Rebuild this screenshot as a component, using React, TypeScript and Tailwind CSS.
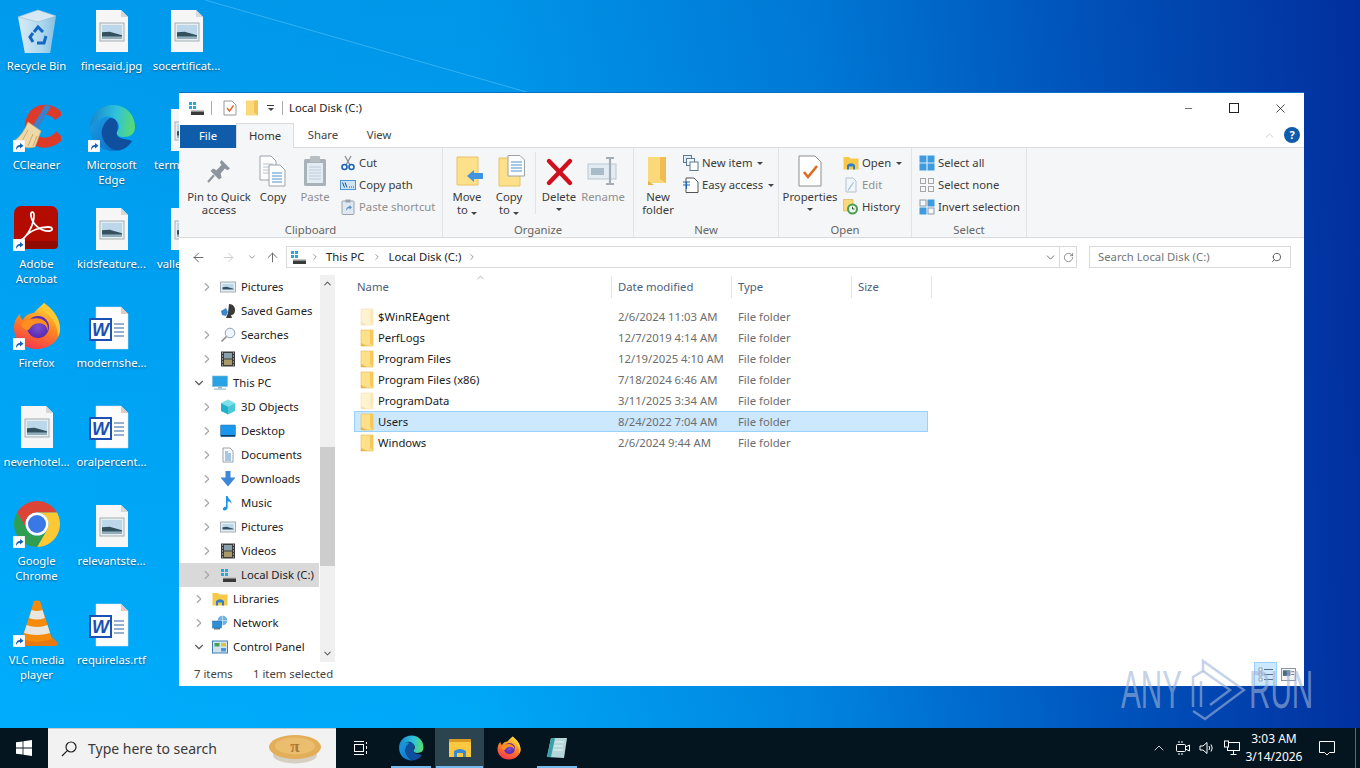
import type { ReactNode } from 'react';
import { ArrowLeft, ArrowRight, ArrowUp, ChevronDown, ChevronRight, ChevronUp, RotateCw, Search, Minus, X } from 'lucide-react';

// ---------- desktop icons ----------
function ImageThumb({ x = 12, y = 18, w = 24, h = 18 }: { x?: number; y?: number; w?: number; h?: number }) {
  return (
    <g>
      <rect x={x} y={y} width={w} height={h} fill="#e6eef2" stroke="#a3aeb4" strokeWidth="1" />
      <rect x={x + 2} y={y + 2} width={w - 4} height={h - 4} fill="#bcd6ea" />
      <path d={`M${x + 2} ${y + h * 0.52} L${x + w * 0.4} ${y + h * 0.48} L${x + w - 2} ${y + h * 0.68} V${y + h * 0.76} H${x + 2}Z`} fill="#33505d" />
      <rect x={x + 2} y={y + h * 0.76} width={w - 4} height={h * 0.24 - 2} fill="#92aebb" />
    </g>
  );
}

function ImageFile() {
  return (
    <svg viewBox="0 0 48 48" className="w-12 h-12">
      <path d="M8 5 H33 L40 12 V47 H8Z" fill="#f6f6f6" />
      <path d="M33 5 L40 12 H33Z" fill="#d8d8d8" />
      <ImageThumb />
    </svg>
  );
}

function WordFile() {
  return (
    <svg viewBox="0 0 48 48" className="w-12 h-12">
      <path d="M8 5 H33 L40 12 V47 H8Z" fill="#fdfdfd" stroke="#dcdcdc" strokeWidth="0.5" />
      <path d="M33 5 L40 12 H33Z" fill="#e2c9c4" />
      <rect x="2" y="17" width="21" height="21" fill="#fff" stroke="#1c50b4" strokeWidth="2" />
      <text x="12.5" y="34" textAnchor="middle" fontFamily="Liberation Sans" fontWeight="700" fontStyle="italic" fontSize="18" fill="#1c50b4">W</text>
      <path d="M26 22 H36 M26 26 H36 M26 30 H36 M26 34 H36" stroke="#33609f" strokeWidth="1.2" />
    </svg>
  );
}

function RecycleBin() {
  return (
    <svg viewBox="0 0 48 48" className="w-12 h-12">
      <defs>
        <linearGradient id="binG" x1="0" x2="1">
          <stop offset="0" stopColor="#e3eef5" />
          <stop offset="0.6" stopColor="#b8dcef" />
          <stop offset="1" stopColor="#8fc0dd" />
        </linearGradient>
      </defs>
      <path d="M5 12 L25 5 L43 11 L37 49 Q24 52 12 49Z" fill="url(#binG)" opacity="0.95" />
      <path d="M5 12 L25 5 L43 11 L25 17Z" fill="#d6e8f2" stroke="#94b8cc" strokeWidth="0.6" />
      <g fill="none" stroke="#1467c4" strokeWidth="3">
        <path d="M21 27 L25 22 L30 27" />
        <path d="M33 31 L31 38 L24 38" />
        <path d="M20 37 L17 32 L20 28" />
      </g>
    </svg>
  );
}

function CCleaner() {
  return (
    <svg viewBox="0 0 48 48" className="w-12 h-12">
      <path d="M46 13 C39 4 26 3 20 12 C14 21 17 35 27 38 C34 40 41 37 47 31" fill="none" stroke="#dd3a2a" strokeWidth="10" />
      <path d="M33 0 L38 3 L24 26 L19 23Z" fill="#3d7fc9" />
      <path d="M15 18 L28 27 L22 43 Q10 46 1 37 Q10 31 15 18Z" fill="#efd9a7" stroke="#c9ab70" strokeWidth="0.7" />
      <path d="M15 26 L9 37 M20 30 L15 42 M24 32 L20 42" stroke="#c9ab70" strokeWidth="1" />
    </svg>
  );
}

function EdgeIcon({ size = 48 }: { size?: number }) {
  return (
    <svg viewBox="0 0 48 48" width={size} height={size}>
      <defs>
        <linearGradient id="edgeA" x1="0" y1="0.5" x2="1" y2="0.6">
          <stop offset="0" stopColor="#1787cf" />
          <stop offset="0.55" stopColor="#2fc2dc" />
          <stop offset="1" stopColor="#5bdc6a" />
        </linearGradient>
        <linearGradient id="edgeB" x1="0" y1="0" x2="1" y2="1">
          <stop offset="0" stopColor="#1b9de2" />
          <stop offset="1" stopColor="#0c6fc7" />
        </linearGradient>
      </defs>
      <path d="M2 24 C3 18 9 14 15 13.5 C21 13 25 15 22 16 C15 19 12 27 15 34 C17 40 22 45 28 47 C13 48 2 38 2 24Z" fill="url(#edgeB)" />
      <path d="M22 14 C30 14 31 22 29 28 C28 32 31 34 36 35 C40 36 43 36 44 37 C41 42 36 46 30 46.5 C25 47 18 42 15 35 C12 28 14 20 22 14Z" fill="#0f4f9e" />
      <path d="M2 24 C2 10 12 1 25 1 C38 1 47 11 47 23 C47 30 42 33 36 33 C31 33 28 31 29 28 C31 25 32 23 30 19 C27 13 20 11 14 14 C8 17 3 20 2 24Z" fill="url(#edgeA)" />
    </svg>
  );
}

function AcrobatIcon() {
  return (
    <svg viewBox="0 0 48 48" className="w-12 h-12">
      <rect x="1" y="3" width="44" height="43" rx="7" fill="#b30b00" />
      <rect x="1" y="38" width="44" height="8" rx="4" fill="#8f0a00" />
      <path d="M8 37 C14 34 21 22 21 12 C21 8 17 8 18 13 C19 21 28 29 37 28 C40 27 40 24 35 24 C28 24 17 27 11 35 C9 38 8 38 8 37Z" fill="none" stroke="#fff" strokeWidth="1.8" />
    </svg>
  );
}

function FirefoxIcon({ size = 48 }: { size?: number }) {
  return (
    <svg viewBox="0 0 48 48" width={size} height={size}>
      <defs>
        <linearGradient id="ffA" x1="0.7" y1="0" x2="0.3" y2="1">
          <stop offset="0" stopColor="#ffdd3f" />
          <stop offset="0.45" stopColor="#ff8a1f" />
          <stop offset="1" stopColor="#f5354f" />
        </linearGradient>
        <radialGradient id="ffB" cx="0.5" cy="0.5" r="0.5">
          <stop offset="0" stopColor="#7d4fd0" />
          <stop offset="1" stopColor="#5a2bb0" />
        </radialGradient>
      </defs>
      <path d="M24 47 C10 47 1 37 1 26 C1 20 4 14 7 12 C7 15 8 17 10 18 C12 13 17 11 21 11 C24 7 27 5 31 1 C36 6 47 14 47 27 C47 38 37 47 24 47Z" fill="url(#ffA)" />
      <path d="M31 1 C38 6 47 14 47 27 C47 30 46 33 45 35 C45 24 40 14 31 10Z" fill="#ffc933" />
      <circle cx="25" cy="25" r="11" fill="url(#ffB)" />
      <path d="M8 22 C14 17 22 15 28 17 C34 19 36 25 34 29 C35 22 27 20 22 22 C17 24 17 28 15 28 C12 28 9 26 8 22Z" fill="#ff8f1f" />
    </svg>
  );
}

function ChromeIcon() {
  return (
    <svg viewBox="0 0 48 48" className="w-12 h-12">
      <path d="M4.1 12.5 A23 23 0 0 1 43.9 12.5 L24 12.5 A11.5 11.5 0 0 0 14 29.7 Z" fill="#db4437" />
      <path d="M43.9 12.5 A23 23 0 0 1 24 47 L34 29.7 A11.5 11.5 0 0 0 24 12.5 Z" fill="#fcc934" />
      <path d="M24 47 A23 23 0 0 1 4.1 12.5 L14 29.7 A11.5 11.5 0 0 0 34 29.7 Z" fill="#2f9e52" />
      <circle cx="24" cy="24" r="11.5" fill="#fff" />
      <circle cx="24" cy="24" r="9" fill="#3b78e7" />
    </svg>
  );
}

function VlcIcon() {
  return (
    <svg viewBox="0 0 48 48" className="w-12 h-12">
      <path d="M3 44 L10 37 H38 L45 44 Q45 47 42 47 H6 Q3 47 3 44Z" fill="#e8780f" />
      <path d="M21 2 Q24 1 27 2 L39 40 Q24 46 9 40Z" fill="#f58a0b" />
      <path d="M18.5 11 Q24 13 29.5 11 L32 19 Q24 22 16 19Z" fill="#e9e6df" />
      <path d="M13.5 26 Q24 30 34.5 26 L37 34 Q24 38 11 34Z" fill="#e9e6df" />
    </svg>
  );
}

function ShortcutArrow() {
  return (
    <svg viewBox="0 0 12 12" className="w-3 h-3 absolute left-0 bottom-0">
      <rect width="12" height="12" fill="#fff" stroke="#c8c8c8" strokeWidth="0.5" />
      <path d="M3 10 C3 6 5 5 7 5 V3 L10.5 5.8 L7 8.5 V6.8 C5.5 6.8 4.5 7.5 3 10Z" fill="#1261b8" />
    </svg>
  );
}

type DeskItem = { icon: ReactNode; label: string[]; shortcut?: boolean; clip?: string };

const desktopItems: DeskItem[] = [
  { icon: <RecycleBin />, label: ['Recycle Bin'] },
  { icon: <CCleaner />, label: ['CCleaner'], shortcut: true },
  { icon: <AcrobatIcon />, label: ['Adobe', 'Acrobat'], shortcut: true },
  { icon: <FirefoxIcon />, label: ['Firefox'], shortcut: true },
  { icon: <ImageFile />, label: ['neverhotel...'] },
  { icon: <ChromeIcon />, label: ['Google', 'Chrome'], shortcut: true },
  { icon: <VlcIcon />, label: ['VLC media', 'player'], shortcut: true },
  { icon: <ImageFile />, label: ['finesaid.jpg'] },
  { icon: <EdgeIcon />, label: ['Microsoft', 'Edge'], shortcut: true },
  { icon: <ImageFile />, label: ['kidsfeature...'] },
  { icon: <WordFile />, label: ['modernshe...'] },
  { icon: <WordFile />, label: ['oralpercent...'] },
  { icon: <ImageFile />, label: ['relevantste...'] },
  { icon: <WordFile />, label: ['requirelas.rtf'] },
  { icon: <ImageFile />, label: ['socertificat...'] },
  { icon: <ImageFile />, label: ['term...'], clip: 'text-left pl-[5px]' },
  { icon: <ImageFile />, label: ['valle...'], clip: 'text-left pl-[8px]' },
];

function DesktopIcon({ item }: { item: DeskItem }) {
  return (
    <div className="flex flex-col items-center w-[75px]">
      <div className="relative w-12 h-12">
        {item.icon}
        {item.shortcut && <ShortcutArrow />}
      </div>
      <div className={`mt-[5px] w-full text-center text-white leading-[15px] [text-shadow:0_1px_2px_rgba(0,0,0,0.5)] ${item.clip ?? ''}`}>
        {item.label.map(l => <div key={l}>{l}</div>)}
      </div>
    </div>
  );
}

// ---------- small explorer icons ----------
function DriveIcon() {
  return (
    <svg viewBox="0 0 16 16" className="w-4 h-4 shrink-0">
      <rect x="1" y="2" width="3" height="3" fill="#2aa7dc" />
      <rect x="5" y="2" width="3" height="3" fill="#2aa7dc" />
      <rect x="1" y="6" width="3" height="3" fill="#2aa7dc" />
      <rect x="5" y="6" width="3" height="3" fill="#2aa7dc" />
      <rect x="3" y="10" width="13" height="1.5" fill="#c5c5c5" />
      <rect x="3" y="11.5" width="13" height="3.5" fill="#3a3a3a" />
    </svg>
  );
}

function FolderList({ light }: { light?: boolean }) {
  return (
    <svg viewBox="0 0 14 18" width="14" height="18" className={`shrink-0 ${light ? 'opacity-40' : ''}`}>
      <path d="M1 1 H13 V17 H1Z" fill="#ffe08a" stroke="#e3b94f" strokeWidth="0.6" />
      <path d="M1 14 L7 17 H1Z" fill="#e8b84a" />
      <path d="M10 1 H13 V17 L10 14Z" fill="#f6c85a" />
    </svg>
  );
}

const NavPictures = () => (
  <svg viewBox="0 0 16 16" className="w-4 h-4 shrink-0">
    <ImageThumb x={0.5} y={3} w={15} h={10} />
  </svg>
);
const NavGames = () => (
  <svg viewBox="0 0 16 16" className="w-4 h-4 shrink-0">
    <path d="M9 1 C13 1 15 4 15 7 C15 11 13 12 11 12 L12 15 H6 L8 10Z" fill="#3a3a3a" />
    <path d="M1 8 L6 5 L8 9 L6 13 L2 12Z" fill="#3c87c9" />
  </svg>
);
const NavSearch = () => (
  <svg viewBox="0 0 16 16" className="w-4 h-4 shrink-0" fill="none">
    <circle cx="10" cy="6" r="4.8" fill="#eef6fb" stroke="#8aa4b8" />
    <path d="M6.5 9.5 L1.5 14.5" stroke="#8a8a8a" strokeWidth="1.6" />
  </svg>
);
const NavVideos = () => (
  <svg viewBox="0 0 16 16" className="w-4 h-4 shrink-0">
    <rect x="1" y="0.5" width="14" height="15" fill="#3c3c3c" />
    <rect x="4" y="2" width="8" height="5.5" fill="#8aa0ae" />
    <rect x="4" y="8.5" width="8" height="5.5" fill="#a89a66" />
    <path d="M2 2 H3 M2 5 H3 M2 8 H3 M2 11 H3 M2 14 H3 M13 2 H14 M13 5 H14 M13 8 H14 M13 11 H14 M13 14 H14" stroke="#ddd" />
  </svg>
);
const NavPC = () => (
  <svg viewBox="0 0 16 16" className="w-4 h-4 shrink-0">
    <rect x="0.5" y="1" width="15" height="10.5" fill="#29a3e6" stroke="#7fb5d6" strokeWidth="0.6" />
    <rect x="6" y="11.5" width="4" height="2" fill="#9bb9cc" />
    <rect x="2" y="13.5" width="12" height="1.2" fill="#9bb9cc" />
  </svg>
);
const Nav3D = () => (
  <svg viewBox="0 0 16 16" className="w-4 h-4 shrink-0">
    <path d="M8 0.5 L15 4 L8 7.5 L1 4Z" fill="#7ce0e8" />
    <path d="M1 4 L8 7.5 V15.5 L1 12Z" fill="#21b0c8" />
    <path d="M15 4 L8 7.5 V15.5 L15 12Z" fill="#4ac9da" />
  </svg>
);
const NavDesktop = () => (
  <svg viewBox="0 0 16 16" className="w-4 h-4 shrink-0">
    <rect x="0.5" y="2" width="15" height="11.5" rx="0.8" fill="#1a97ea" stroke="#2a6aa8" strokeWidth="0.5" />
    <rect x="1" y="12" width="14" height="1.5" fill="#0d3f6e" />
  </svg>
);
const NavDocs = () => (
  <svg viewBox="0 0 16 16" className="w-4 h-4 shrink-0">
    <path d="M3 1 H10 L13 4 V15 H3Z" fill="#fdfdfd" stroke="#8a8a8a" strokeWidth="0.8" />
    <path d="M5 5 H8 M5 7 H11 M5 9 H11 M5 11 H11 M5 13 H11" stroke="#4b93c9" />
  </svg>
);
const NavDownloads = () => (
  <svg viewBox="0 0 16 16" className="w-4 h-4 shrink-0">
    <path d="M5.5 0 H10.5 V6.5 H15.5 L8 15.5 L0.5 6.5 H5.5Z" fill="#3c87d8" />
  </svg>
);
const NavMusic = () => (
  <svg viewBox="0 0 16 16" className="w-4 h-4 shrink-0">
    <path d="M6 1 H7.6 C8 4 12 5 11.5 9 C11 7 9.5 6.5 7.6 6.2 V12.5 C7.6 14.5 5.8 15.5 4.5 15.5 C3 15.5 2.5 14.3 3 13.3 C3.6 12 5 11.5 6 11.8Z" fill="#1c93e0" />
  </svg>
);
const NavLibraries = () => (
  <svg viewBox="0 0 16 16" className="w-4 h-4 shrink-0">
    <path d="M0.5 2 H6 L7.5 3.5 H15.5 V14.5 H0.5Z" fill="#f7c948" />
    <path d="M4 14.5 V10 Q8 6.5 12 10 V14.5 H10 V11.5 H6 V14.5Z" fill="#2f7fc9" />
  </svg>
);
const NavNetwork = () => (
  <svg viewBox="0 0 16 16" className="w-4 h-4 shrink-0">
    <circle cx="10.5" cy="5.5" r="4.8" fill="#6fb2e0" />
    <path d="M6 5.5 H15 M10.5 1 V10" stroke="#d7ebf7" strokeWidth="0.7" />
    <rect x="0.5" y="6" width="9" height="7" fill="#2f8fd6" stroke="#1c6aa8" strokeWidth="0.5" />
    <rect x="2" y="13" width="6" height="1.5" fill="#5a7b93" />
  </svg>
);
const NavControl = () => (
  <svg viewBox="0 0 16 16" className="w-4 h-4 shrink-0">
    <rect x="0.5" y="2" width="15" height="12" fill="#cfe6f6" stroke="#3f7fb5" />
    <rect x="2.5" y="4" width="5" height="3.5" fill="#48a14d" />
    <rect x="9" y="4" width="5" height="3.5" fill="#e2c048" />
    <rect x="2.5" y="9" width="5" height="3.5" fill="#d9dce0" />
    <rect x="9" y="9" width="5" height="3.5" fill="#4e95d6" />
  </svg>
);

type NavItem = { icon: ReactNode; label: string; level: 1 | 2; arrow?: 'right' | 'down'; active?: boolean };

const navItems: NavItem[] = [
  { icon: <NavPictures />, label: 'Pictures', level: 2, arrow: 'right' },
  { icon: <NavGames />, label: 'Saved Games', level: 2 },
  { icon: <NavSearch />, label: 'Searches', level: 2, arrow: 'right' },
  { icon: <NavVideos />, label: 'Videos', level: 2, arrow: 'right' },
  { icon: <NavPC />, label: 'This PC', level: 1, arrow: 'down' },
  { icon: <Nav3D />, label: '3D Objects', level: 2, arrow: 'right' },
  { icon: <NavDesktop />, label: 'Desktop', level: 2, arrow: 'right' },
  { icon: <NavDocs />, label: 'Documents', level: 2, arrow: 'right' },
  { icon: <NavDownloads />, label: 'Downloads', level: 2, arrow: 'right' },
  { icon: <NavMusic />, label: 'Music', level: 2, arrow: 'right' },
  { icon: <NavPictures />, label: 'Pictures', level: 2, arrow: 'right' },
  { icon: <NavVideos />, label: 'Videos', level: 2, arrow: 'right' },
  { icon: <DriveIcon />, label: 'Local Disk (C:)', level: 2, arrow: 'right', active: true },
  { icon: <NavLibraries />, label: 'Libraries', level: 1, arrow: 'right' },
  { icon: <NavNetwork />, label: 'Network', level: 1, arrow: 'right' },
  { icon: <NavControl />, label: 'Control Panel', level: 1, arrow: 'down' },
];

function NavRow({ item }: { item: NavItem }) {
  return (
    <div className={`h-6 flex items-center w-[140px] ${item.level === 2 ? 'pl-[23px]' : 'pl-[15px]'} ${item.active ? 'bg-[#d9d9d9]' : ''}`}>
      <span className="w-[10px] shrink-0 flex justify-center">
        {item.arrow === 'right' && <ChevronRight size={14} strokeWidth={2} className="text-[#a6a6a6] shrink-0" />}
        {item.arrow === 'down' && <ChevronDown size={14} strokeWidth={2} className="text-[#5a5a5a] shrink-0" />}
      </span>
      <span className="ml-[8px]">{item.icon}</span>
      <span className="ml-[5px] whitespace-nowrap">{item.label}</span>
    </div>
  );
}

// ---------- ribbon icons ----------
function Caret() {
  return <span className="inline-block w-0 h-0 border-x-[3px] border-x-transparent border-t-[3px] border-t-[#444]" />;
}

const IcPin = () => (
  <svg viewBox="-3 -3 38 38" className="w-8 h-8">
    <path d="M19 3 L29 13 L26 15 L23 13 L18 19 L19 24 L16 26 L6 16 L9 13 L13 15 L19 9 L17 6Z" fill="#8c959e" />
    <path d="M10 21 L3 29" stroke="#8c959e" strokeWidth="2.5" />
  </svg>
);
const IcCopy = () => (
  <svg viewBox="0 0 32 32" className="w-8 h-8">
    <path d="M3 1 H14 L19 6 V25 H3Z" fill="#fdfdfd" stroke="#9aa3ab" />
    <path d="M6 9 H16 M6 12 H16 M6 15 H16 M6 18 H16" stroke="#b8c4cd" />
    <path d="M12 10 H23 L28 15 V31 H12Z" fill="#fdfdfd" stroke="#9aa3ab" />
    <path d="M15 18 H25 M15 21 H25 M15 24 H25 M15 27 H25" stroke="#4b93d3" />
  </svg>
);
const IcPaste = () => (
  <svg viewBox="0 0 32 32" className="w-8 h-8">
    <rect x="5" y="4" width="22" height="27" rx="1.5" fill="#aab2b9" />
    <rect x="8" y="8" width="16" height="20" fill="#e3ebf3" />
    <path d="M10 12 H22 M10 15 H22 M10 18 H22 M10 21 H22 M10 24 H22" stroke="#bccbd9" />
    <rect x="11" y="1" width="10" height="6" rx="1" fill="#b7bec4" />
  </svg>
);
const IcCut = () => (
  <svg viewBox="0 0 16 16" className="w-4 h-4">
    <path d="M5 1 L10 10 M11 1 L6 10" stroke="#8a8f94" strokeWidth="1.3" />
    <circle cx="4.5" cy="12" r="2.5" fill="none" stroke="#1f62b5" strokeWidth="1.6" />
    <circle cx="11.5" cy="12" r="2.5" fill="none" stroke="#1f62b5" strokeWidth="1.6" />
  </svg>
);
const IcCopyPath = () => (
  <svg viewBox="0 0 16 16" className="w-4 h-4">
    <rect x="0.5" y="3.5" width="15" height="9" fill="#cfe4f5" stroke="#4b93d3" />
    <path d="M2.5 5.5 L4.5 10.5 M5 5.5 L7 10.5" stroke="#1c4f86" />
    <path d="M9 10 H10 M11 10 H12 M13 10 H14" stroke="#1c4f86" />
  </svg>
);
const IcPasteShortcut = () => (
  <svg viewBox="0 0 16 16" className="w-4 h-4">
    <rect x="2" y="2" width="12" height="13.5" rx="1" fill="#dfe8f2" stroke="#9aa3ab" />
    <rect x="5.5" y="0.5" width="5" height="3" fill="#9aa3ab" />
    <path d="M6 12 C6 8.5 8 7.5 9.5 7.5 V6 L12 8.5 L9.5 10.5 V9 C8 9 7 10 6 12Z" fill="#5a8fc8" />
  </svg>
);
const IcMove = () => (
  <svg viewBox="0 0 32 32" className="w-8 h-8">
    <path d="M6 2 H27 V30 H6Z" fill="#fde08a" stroke="#e8c264" />
    <path d="M16 21 L23 15 V18 H32 V24 H23 V27Z" fill="#3f93e0" />
  </svg>
);
const IcCopyTo = () => (
  <svg viewBox="0 0 32 32" className="w-8 h-8">
    <path d="M6 3 H27 V31 H6Z" fill="#fde08a" stroke="#e8c264" />
    <path d="M15 0.5 H27 L31.5 5 V21 H15Z" fill="#fdfdfd" stroke="#9aa3ab" />
    <path d="M18 7 H29 M18 10 H29 M18 13 H29 M18 16 H29" stroke="#4b93d3" />
  </svg>
);
const IcDelete = () => (
  <svg viewBox="0 0 32 32" className="w-8 h-8">
    <path d="M6 6 L27 28 M27 6 L6 28" stroke="#d0101c" strokeWidth="4.4" strokeLinecap="round" />
  </svg>
);
const IcRename = () => (
  <svg viewBox="0 0 32 32" className="w-8 h-8">
    <rect x="1" y="9" width="28" height="15" fill="#e4ecf3" stroke="#bac6d1" />
    <rect x="4" y="13" width="13" height="7" fill="#a9bac9" />
    <path d="M19 3 H27 M23 3 V29 M19 29 H27" stroke="#a3adb7" strokeWidth="2.2" />
  </svg>
);
const IcNewFolder = () => (
  <svg viewBox="0 0 32 32" className="w-8 h-8">
    <path d="M6 2 H24 V28 H6Z" fill="#fbd879" />
    <path d="M18 2 H24 V28 L18 24Z" fill="#efbd52" />
    <path d="M6 26 L12 30 H6Z" fill="#e6b348" />
  </svg>
);
const IcNewItem = () => (
  <svg viewBox="0 0 16 16" className="w-4 h-4">
    <rect x="0.5" y="0.5" width="8" height="7" fill="#e3eef7" stroke="#5a7b93" />
    <rect x="3.5" y="3.5" width="8" height="7" fill="#f3f7fa" stroke="#5a7b93" />
    <rect x="7" y="7" width="8" height="8.5" fill="#fff" stroke="#5a7b93" />
  </svg>
);
const IcEasy = () => (
  <svg viewBox="0 0 16 16" className="w-4 h-4">
    <path d="M3 1 H11 L15 5 V15.5 H3Z" fill="#fff" stroke="#555" />
    <path d="M0 5 H7 M0 8 H7 M3.5 5 V12" stroke="#1f62b5" strokeWidth="1.1" />
  </svg>
);
const IcProperties = () => (
  <svg viewBox="0 0 32 32" className="w-8 h-8">
    <path d="M5 1 H21 L27 7 V31 H5Z" fill="#fff" stroke="#8d8d8d" />
    <path d="M10 17 L14 22 L23 11" fill="none" stroke="#e06a1e" strokeWidth="2.6" />
  </svg>
);
const IcEdit = () => (
  <svg viewBox="0 0 16 16" className="w-4 h-4">
    <path d="M3 1 H10 L13 4 V15 H3Z" fill="#f4f7fa" stroke="#b5c1cc" />
    <path d="M11 6 L6 13 L4.5 14.5 L5 12 L10 5Z" fill="#a9c6df" />
  </svg>
);
const IcHistory = () => (
  <svg viewBox="0 0 16 16" className="w-4 h-4">
    <path d="M0.5 0.5 H10 V12 H0.5Z" fill="#fbd879" stroke="#d7ae4e" strokeWidth="0.6" />
    <circle cx="9.5" cy="10" r="5.5" fill="#46a04d" />
    <circle cx="9.5" cy="10" r="3.5" fill="#eef4ee" />
    <path d="M9.5 7.8 V10 L11.5 10" stroke="#444" fill="none" />
  </svg>
);
const IcSelectAll = () => (
  <svg viewBox="0 0 16 16" className="w-4 h-4">
    <rect x="0.5" y="0.5" width="15" height="15" fill="#3e9be0" />
    <path d="M8 0 V16 M0 8 H16" stroke="#d8ecfa" strokeWidth="1.2" />
  </svg>
);
const IcSelectNone = () => (
  <svg viewBox="0 0 16 16" className="w-4 h-4" fill="none" stroke="#a6a6a6">
    <rect x="1.5" y="1.5" width="5" height="5" />
    <rect x="9.5" y="1.5" width="5" height="5" />
    <rect x="1.5" y="9.5" width="5" height="5" />
    <rect x="9.5" y="9.5" width="5" height="5" />
  </svg>
);
const IcInvert = () => (
  <svg viewBox="0 0 16 16" className="w-4 h-4">
    <rect x="1" y="1" width="6" height="6" fill="none" stroke="#8a9aa8" />
    <rect x="8.5" y="0.5" width="7" height="7" fill="#3e9be0" />
    <rect x="0.5" y="8.5" width="7" height="7" fill="#3e9be0" />
    <rect x="9" y="9" width="6" height="6" fill="none" stroke="#8a9aa8" />
  </svg>
);

// ---------- ribbon parts ----------
function BigButton({ icon, lines, w, ml, disabled, caret }: { icon: ReactNode; lines: string[]; w: string; ml: string; disabled?: boolean; caret?: 'inline' | 'below' }) {
  return (
    <div className={`flex flex-col items-center pt-[7px] shrink-0 ${w} ${ml} ${disabled ? 'text-[#8f8f8f]' : 'text-[#3b3b3b]'}`}>
      {icon}
      <div className="mt-[3px] text-center leading-[13px] whitespace-nowrap">
        {lines.map((l, i) => (
          <div key={l}>
            {l}
            {caret === 'inline' && i === lines.length - 1 && <span className="ml-[3px] inline-block align-middle"><Caret /></span>}
          </div>
        ))}
        {caret === 'below' && <div className="h-[13px] flex items-center justify-center"><Caret /></div>}
      </div>
    </div>
  );
}

function SmallColumn({ ml, rows }: { ml: string; rows: { icon: ReactNode; label: string; disabled?: boolean; caret?: boolean }[] }) {
  return (
    <div className={`pt-[4px] shrink-0 ${ml}`}>
      {rows.map(r => (
        <div key={r.label} className={`h-[22px] flex items-center gap-[3px] whitespace-nowrap ${r.disabled ? 'text-[#8f8f8f]' : 'text-[#3b3b3b]'}`}>
          {r.icon}
          <span>{r.label}</span>
          {r.caret && <span className="ml-[2px] flex"><Caret /></span>}
        </div>
      ))}
    </div>
  );
}

function RibbonGroup({ label, w, children }: { label: string; w: string; children: ReactNode }) {
  return (
    <div className={`relative flex flex-col shrink-0 ${w} border-r border-[#e2e3e4]`}>
      <div className="h-[74px] flex">{children}</div>
      <div className="h-[15px] pt-[2px] flex items-center justify-center text-[#666]">{label}</div>
    </div>
  );
}

const files = [
  { name: '$WinREAgent', date: '2/6/2024 11:03 AM', light: true },
  { name: 'PerfLogs', date: '12/7/2019 4:14 AM' },
  { name: 'Program Files', date: '12/19/2025 4:10 AM' },
  { name: 'Program Files (x86)', date: '7/18/2024 6:46 AM' },
  { name: 'ProgramData', date: '3/11/2025 3:34 AM', light: true },
  { name: 'Users', date: '8/24/2022 7:04 AM', selected: true },
  { name: 'Windows', date: '2/6/2024 9:44 AM' },
];

function ExplorerWindow() {
  return (
    <div className="absolute left-[179px] top-[93px] w-[1125px] h-[593px] bg-white flex flex-col text-[#222] shadow-[0_-1px_0_#0b6fc4]">
      {/* title bar */}
      <div className="h-[30px] flex items-center shrink-0">
        <span className="ml-[9px]"><DriveIcon /></span>
        <span className="ml-[7px] w-px h-[14px] bg-[#aaa]" />
        <svg viewBox="0 0 16 16" className="w-4 h-4 ml-[10px]">
          <path d="M2 1 H10 L14 5 V15 H2Z" fill="#fff" stroke="#999" />
          <path d="M5 8 L7.5 11 L11.5 5.5" fill="none" stroke="#e0672a" strokeWidth="1.4" />
        </svg>
        <svg viewBox="0 0 14 16" className="w-[14px] h-4 ml-[7px]">
          <path d="M1 0.5 H13 V15.5 H1Z" fill="#fbd879" />
          <path d="M9 0.5 H13 V15.5 L9 12Z" fill="#f1c257" />
        </svg>
        <span className="ml-[8px] flex flex-col items-center">
          <span className="w-[7px] h-px bg-[#333] mb-[2px]" />
          <Caret />
        </span>
        <span className="ml-[8px] w-px h-[14px] bg-[#aaa]" />
        <span className="ml-[6px] text-[#222]">Local Disk (C:)</span>
        <div className="ml-auto flex items-center text-[#222]">
          <span className="w-[46px] flex justify-center"><Minus size={11} strokeWidth={1.4} /></span>
          <span className="w-[46px] flex justify-center"><span className="w-[10px] h-[10px] border border-[#222]" /></span>
          <span className="w-[46px] flex justify-center mr-[1px]"><X size={15} strokeWidth={1.3} /></span>
        </div>
      </div>
      {/* tabs */}
      <div className="h-[25px] flex items-end shrink-0 border-b border-[#dadbdc]">
        <div className="ml-px w-[56px] h-[23px] -mb-px bg-[#0f5cab] text-white flex items-center justify-center">File</div>
        <div className="w-[58px] h-[25px] -mb-px bg-[#f5f6f7] border-x border-t border-[#dadbdc] text-[#333] flex items-center justify-center">Home</div>
        <div className="w-[58px] h-[24px] text-[#444] flex items-center justify-center">Share</div>
        <div className="w-[54px] h-[24px] text-[#444] flex items-center justify-center">View</div>
        <div className="ml-auto flex items-center h-[24px] mr-[4px]">
          <ChevronUp size={13} strokeWidth={1.5} className="text-[#c2c2c2] mr-[8px]" />
          <span className="w-[16px] h-[16px] rounded-full bg-[#0f5cab] text-white font-bold text-[11px] flex items-center justify-center">?</span>
        </div>
      </div>
      {/* ribbon */}
      <div className="h-[90px] flex bg-[#f5f6f7] border-b border-[#dadbdc] shrink-0">
        <RibbonGroup label="Clipboard" w="w-[264px]">
          <BigButton icon={<IcPin />} lines={['Pin to Quick', 'access']} w="w-[76px]" ml="ml-[2px]" />
          <BigButton icon={<IcCopy />} lines={['Copy']} w="w-[32px]" ml="ml-0" />
          <BigButton icon={<IcPaste />} lines={['Paste']} w="w-[36px]" ml="ml-[8px]" disabled />
          <SmallColumn ml="ml-[7px]" rows={[
            { icon: <IcCut />, label: 'Cut' },
            { icon: <IcCopyPath />, label: 'Copy path' },
            { icon: <IcPasteShortcut />, label: 'Paste shortcut', disabled: true },
          ]} />
        </RibbonGroup>
        <RibbonGroup label="Organize" w="w-[191px]">
          <BigButton icon={<IcMove />} lines={['Move', 'to']} w="w-[36px]" ml="ml-[6px]" caret="inline" />
          <BigButton icon={<IcCopyTo />} lines={['Copy', 'to']} w="w-[36px]" ml="ml-[6px]" caret="inline" />
          <span className="ml-[8px] w-px h-[62px] mt-[4px] bg-[#e2e3e4]" />
          <BigButton icon={<IcDelete />} lines={['Delete']} w="w-[44px]" ml="ml-px" caret="below" />
          <BigButton icon={<IcRename />} lines={['Rename']} w="w-[44px]" ml="ml-0" disabled />
        </RibbonGroup>
        <RibbonGroup label="New" w="w-[145px]">
          <BigButton icon={<IcNewFolder />} lines={['New', 'folder']} w="w-[40px]" ml="ml-[4px]" />
          <SmallColumn ml="ml-[5px]" rows={[
            { icon: <IcNewItem />, label: 'New item', caret: true },
            { icon: <IcEasy />, label: 'Easy access', caret: true },
          ]} />
        </RibbonGroup>
        <RibbonGroup label="Open" w="w-[133px]">
          <BigButton icon={<IcProperties />} lines={['Properties']} w="w-[56px]" ml="ml-[3px]" caret="below" />
          <SmallColumn ml="ml-[5px]" rows={[
            { icon: <NavLibraries />, label: 'Open', caret: true },
            { icon: <IcEdit />, label: 'Edit', disabled: true },
            { icon: <IcHistory />, label: 'History' },
          ]} />
        </RibbonGroup>
        <RibbonGroup label="Select" w="w-[115px]">
          <SmallColumn ml="ml-[7px]" rows={[
            { icon: <IcSelectAll />, label: 'Select all' },
            { icon: <IcSelectNone />, label: 'Select none' },
            { icon: <IcInvert />, label: 'Invert selection' },
          ]} />
        </RibbonGroup>
      </div>
      {/* address row */}
      <div className="h-[34px] pt-[4px] flex items-center shrink-0">
        <ArrowLeft size={15} strokeWidth={1.6} className="ml-[12px] text-[#6b6b6b]" />
        <ArrowRight size={15} strokeWidth={1.6} className="ml-[15px] text-[#cfcfcf]" />
        <ChevronDown size={10} strokeWidth={2} className="ml-[11px] text-[#8a8a8a]" />
        <ArrowUp size={15} strokeWidth={1.6} className="ml-[8px] text-[#6b6b6b]" />
        <div className="ml-[6px] w-[791px] h-[22px] border border-[#d9d9d9] flex items-center">
          <span className="ml-[3px]"><DriveIcon /></span>
          <ChevronRight size={10} strokeWidth={2} className="ml-[4px] text-[#8a8a8a]" />
          <span className="ml-[6px]">This PC</span>
          <ChevronRight size={10} strokeWidth={2} className="ml-[7px] text-[#8a8a8a]" />
          <span className="ml-[7px]">Local Disk (C:)</span>
          <ChevronRight size={10} strokeWidth={2} className="ml-[6px] text-[#8a8a8a]" />
          <ChevronDown size={13} strokeWidth={1.8} className="ml-auto text-[#6b6b6b]" />
          <span className="ml-[2px] w-px h-full bg-[#d9d9d9]" />
          <RotateCw size={11} strokeWidth={1.6} className="ml-[3px] mr-[2px] text-[#6b6b6b]" />
        </div>
        <div className="ml-[12px] w-[202px] h-[22px] border border-[#d9d9d9] flex items-center text-[#757575]">
          <span className="ml-[8px]">Search Local Disk (C:)</span>
          <Search size={11} strokeWidth={2} className="ml-auto mr-[8px] text-[#555] -scale-x-100" />
        </div>
      </div>
      {/* content */}
      <div className="h-[390px] flex shrink-0">
        <div className="w-[141px] pt-[3px] shrink-0">
          {navItems.map((n, i) => <NavRow key={i} item={n} />)}
        </div>
        <div className="w-[15px] mt-[3px] bg-[#f0f0f0] flex flex-col shrink-0">
          <div className="h-[17px] flex items-center justify-center"><ChevronUp size={11} strokeWidth={2.4} className="text-[#606060]" /></div>
          <div className="h-[155px]" />
          <div className="h-[119px] bg-[#cdcdcd]" />
          <div className="flex-1" />
          <div className="h-[17px] flex items-center justify-center"><ChevronDown size={11} strokeWidth={2.4} className="text-[#606060]" /></div>
        </div>
        <div className="flex-1 relative">
          <ChevronUp size={11} strokeWidth={1.4} className="absolute left-[140px] top-0 text-[#8a8a8a]" />
          <div className="ml-[16px] mt-[4px] h-[22px] flex text-[#4c607a]">
            <div className="w-[261px] pl-[6px] flex items-center border-r border-[#e5e5e5]">Name</div>
            <div className="w-[120px] pl-[6px] flex items-center border-r border-[#e5e5e5]">Date modified</div>
            <div className="w-[120px] pl-[6px] flex items-center border-r border-[#e5e5e5]">Type</div>
            <div className="w-[80px] pl-[6px] flex items-center border-r border-[#e5e5e5]">Size</div>
          </div>
          <div className="mt-[8px] ml-[19px] w-[574px]">
            {files.map(f => (
              <div key={f.name} className={`h-[21px] pt-px grid grid-cols-[263px_120px_1fr] items-center border ${f.selected ? 'bg-[#cce8ff] border-[#99d1ff]' : 'border-transparent'}`}>
                <div className="pl-[5px] flex items-center gap-[4px] text-[#1a1a1a] whitespace-nowrap">
                  <FolderList light={f.light} />
                  {f.name}
                </div>
                <div className="text-[#6d6d6d] whitespace-nowrap">{f.date}</div>
                <div className="text-[#6d6d6d]">File folder</div>
              </div>
            ))}
          </div>
        </div>
      </div>
      {/* status bar */}
      <div className="h-[24px] flex items-center shrink-0 text-[#444]">
        <span className="ml-[15px] w-[59px]">7 items</span>
        <span>1 item selected</span>
        <div className="ml-auto mr-[8px] flex items-center">
          <span className="w-[23px] h-[24px] bg-[#cce8ff] border border-[#99d1ff] flex items-center justify-center">
            <svg viewBox="0 0 16 16" className="w-4 h-4">
              <path d="M1 2 H4 V5 H1Z M1 7 H4 V10 H1Z M1 12 H4 V15 H1Z" fill="#fff" stroke="#6a7f92" strokeWidth="0.7" />
              <path d="M6 3.5 H15 M6 8.5 H15 M6 13.5 H15" stroke="#5a6f82" strokeWidth="1" />
            </svg>
          </span>
          <svg viewBox="0 0 16 14" className="w-[15px] h-[13px] ml-[4px]">
            <rect x="0.5" y="0.5" width="15" height="13" fill="#f4f6f8" stroke="#7f8f9c" />
            <rect x="2" y="2.5" width="8" height="6" fill="#4c6a7c" />
            <path d="M11 4 H14 M11 7 H14" stroke="#5a6f82" />
          </svg>
        </div>
      </div>
    </div>
  );
}

function Watermark() {
  return (
    <div className="absolute left-[1121px] top-[657px] h-[65px] w-[192px] flex items-center text-[#a0b4d8]/60 pointer-events-none">
      <span className="w-[62px] shrink-0 text-[53px] leading-none font-['Liberation_Sans'] scale-x-[0.56] origin-left whitespace-nowrap">ANY</span>
      <svg viewBox="0 0 56 65" className="w-[56px] h-[65px] ml-[7px] shrink-0" fill="none" stroke="currentColor" strokeWidth="2.5">
        <path d="M3 50 V20 L13 14 V4 L54 33 L15 62 L3 54" />
        <path d="M11 50 V24 M13 14 L40 33 L20 48" />
      </svg>
      <span className="ml-[3px] w-[60px] shrink-0 text-[53px] leading-none font-['Liberation_Sans'] scale-x-[0.56] origin-left whitespace-nowrap">RUN</span>
    </div>
  );
}

function Taskbar() {
  return (
    <div className="h-[40px] bg-[#05151f] flex shrink-0">
      <div className="w-[48px] flex items-center justify-center">
        <svg viewBox="0 0 16 16" className="w-4 h-4">
          <path d="M0 2.3 L6.6 1.4 V7.6 H0Z M7.4 1.3 L16 0 V7.6 H7.4Z M0 8.4 H6.6 V14.6 L0 13.7Z M7.4 8.4 H16 V16 L7.4 14.7Z" fill="#fff" />
        </svg>
      </div>
      <div className="w-[288px] bg-[#f2f2f2] border-t border-[#c9c9c9] flex items-center relative">
        <svg viewBox="0 0 16 16" className="w-4 h-4 ml-[13px]" fill="none" stroke="#222" strokeWidth="1.2">
          <circle cx="10" cy="6" r="5" />
          <path d="M6.3 9.7 L1 15" />
        </svg>
        <span className="ml-[11px] text-[14px] text-[#3a3a3a] whitespace-nowrap">Type here to search</span>
        <svg viewBox="0 0 54 30" className="absolute left-[220px] top-[5px] w-[54px] h-[30px]">
          <ellipse cx="27" cy="21" rx="22" ry="8.5" fill="#d4cfc0" />
          <ellipse cx="27" cy="13" rx="26" ry="12" fill="#e3ae58" />
          <ellipse cx="27" cy="12" rx="20" ry="8.5" fill="#ebbd6e" />
          <text x="27" y="18" textAnchor="middle" fontFamily="Liberation Serif" fontWeight="700" fontSize="17" fill="#a87a35">π</text>
        </svg>
      </div>
      <div className="w-[48px] flex items-center justify-center">
        <svg viewBox="0 0 16 16" className="w-4 h-4" fill="none" stroke="#fff">
          <rect x="2.5" y="4.5" width="9" height="7" />
          <path d="M2 1.5 H12 M2 14.5 H12 M14.5 2 V4 M14.5 6 V9 M14.5 11 V14" />
        </svg>
      </div>
      <div className="ml-[3px] w-[48px] flex items-center justify-center relative">
        <EdgeIcon size={26} />
        <span className="absolute bottom-0 left-[4px] right-[4px] h-[2px] bg-[#76b9ed]" />
      </div>
      <div className="w-[49px] bg-[#2c4350] flex items-center justify-center relative">
        <svg viewBox="0 0 24 24" className="w-6 h-6">
          <path d="M1 3 H9 L11 6 H23 V21 H1Z" fill="#fbc83f" />
          <rect x="1" y="3" width="22" height="3" fill="#d99a25" />
          <path d="M6 21 V15 Q12 11 18 15 V21 H15 V17 H9 V21Z" fill="#3a8ad3" />
        </svg>
        <span className="absolute bottom-0 left-[1px] right-[1px] h-[2px] bg-[#76b9ed]" />
      </div>
      <div className="w-[49px] flex items-center justify-center">
        <FirefoxIcon size={24} />
      </div>
      <div className="w-[48px] flex items-center justify-center relative">
        <svg viewBox="0 0 24 24" className="w-6 h-6">
          <path d="M6 2 L22 2 L19 22 L2 21Z" fill="#b6d7da" />
          <path d="M6 2 L10 2 L6 21 L2 21Z" fill="#3aa0a8" />
          <path d="M10 6 H19 M9 10 H18 M8 14 H18" stroke="#e9f2f3" />
        </svg>
        <span className="absolute bottom-0 left-[4px] right-[4px] h-[2px] bg-[#76b9ed]" />
      </div>
      <div className="ml-auto w-[213px] flex items-center text-white shrink-0">
        <span className="w-[24px] flex justify-center"><ChevronUp size={16} strokeWidth={1.2} /></span>
        <span className="w-[24px] flex justify-center">
          <svg viewBox="0 0 16 16" className="w-4 h-4" fill="none" stroke="#fff">
            <rect x="1.5" y="4.5" width="9" height="7" rx="1" />
            <path d="M10.5 7 L14.5 5 V11 L10.5 9" />
            <path d="M3 2 H9 M3 14 H9" strokeDasharray="2 1" />
          </svg>
        </span>
        <span className="w-[24px] flex justify-center">
          <svg viewBox="0 0 16 16" className="w-4 h-4" fill="none" stroke="#fff">
            <path d="M1 6 H4 L8 2.5 V13.5 L4 10 H1Z" />
            <path d="M10 6 Q11.5 8 10 10 M12 4.5 Q14.5 8 12 11.5" />
          </svg>
        </span>
        <span className="w-[26px] flex justify-center">
          <svg viewBox="0 0 16 16" className="w-4 h-4" fill="none" stroke="#fff">
            <rect x="3.5" y="2.5" width="12" height="8" />
            <rect x="0.5" y="1" width="4" height="6" fill="#05151f" />
            <path d="M9.5 10.5 V14 M6.5 14.5 H12.5" />
          </svg>
        </span>
        <div className="w-[58px] flex flex-col items-center text-[12px] leading-[18px] whitespace-nowrap">
          <span>3:03 AM</span>
          <span>3/14/2026</span>
        </div>
        <span className="w-[48px] flex justify-center">
          <svg viewBox="0 0 16 16" className="w-4 h-4" fill="none" stroke="#fff">
            <path d="M0.5 1.5 H15.5 V12.5 H10.5 L8 15 L5.5 12.5 H0.5Z" />
          </svg>
        </span>
        <span className="ml-[4px] w-px h-full bg-[#5a6870]" />
      </div>
    </div>
  );
}

export default function App() {
  return (
    <div className="w-[1360px] h-[768px] overflow-hidden flex flex-col font-['Noto_Sans',sans-serif] text-[11.3px]">
      <div className="relative flex-1 bg-[linear-gradient(90deg,#00adfc_0%,#00a8f8_35%,#0084e0_60%,#0058c0_80%,#0230a0_100%)]">
        <div className="absolute inset-0 bg-[linear-gradient(180deg,rgba(0,40,140,0.14),rgba(0,40,140,0))]" />
        {/* wallpaper light beam */}
        <svg viewBox="0 0 1360 728" className="absolute inset-0 w-[1360px] h-[728px]">
          <path d="M205 0 L530 93" stroke="#7fd4ff" strokeOpacity="0.4" />
        </svg>
        <div className="absolute top-0 bottom-0 left-[-1px] pt-[5px] grid grid-flow-col grid-rows-[repeat(7,99px)] auto-cols-[75px]">
          {desktopItems.map((d, i) => <DesktopIcon key={i} item={d} />)}
        </div>
        <ExplorerWindow />
        <Watermark />
      </div>
      <Taskbar />
    </div>
  );
}
